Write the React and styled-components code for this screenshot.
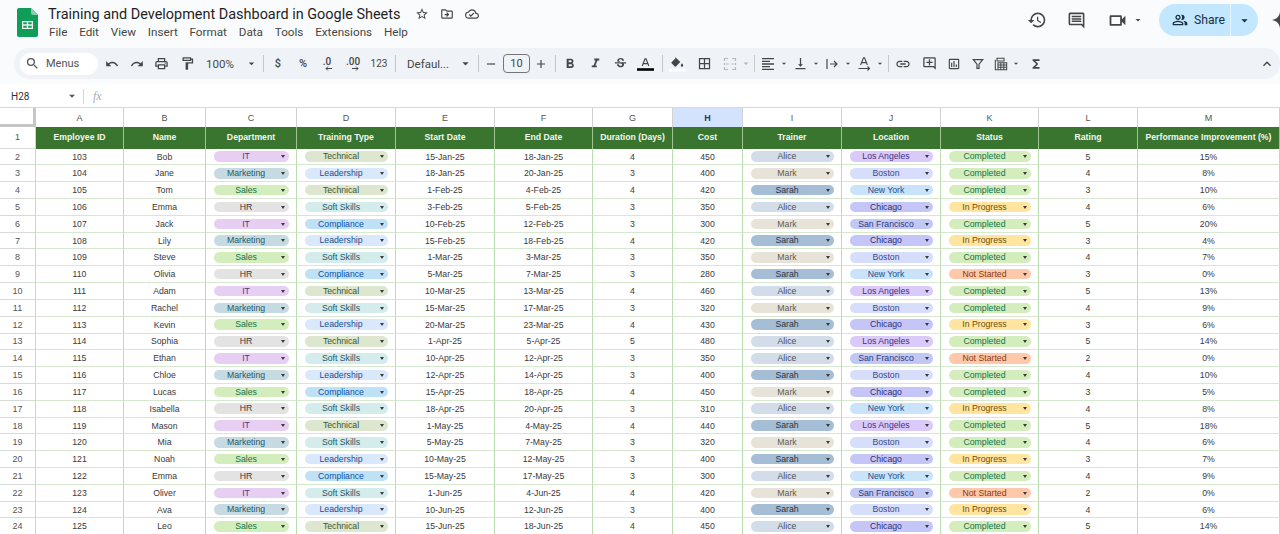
import React from "react";
import styled, { createGlobalStyle } from "styled-components";
import {
  MdStarBorder, MdOutlineDriveFileMove, MdOutlineCloudDone, MdHistory, MdOutlineComment,
  MdOutlineVideocam, MdOutlinePeopleAlt, MdArrowDropDown, MdSearch, MdUndo, MdRedo,
  MdOutlinePrint, MdOutlineFormatPaint, MdRemove, MdAdd, MdFormatBold, MdFormatItalic,
  MdStrikethroughS, MdBorderAll, MdFormatAlignLeft,
  MdVerticalAlignBottom, MdLink, MdOutlineAddComment, MdOutlineInsertChart,
  MdFunctions, MdExpandLess,
} from "react-icons/md";

const Global = createGlobalStyle`
  html, body { margin: 0; padding: 0; height: 534px; overflow: hidden; background: #fff; }
  * { box-sizing: border-box; }
`;

const COLUMNS = [
  ["A", 88], ["B", 82], ["C", 91], ["D", 99], ["E", 99], ["F", 98], ["G", 80],
  ["H", 70], ["I", 99], ["J", 99], ["K", 98], ["L", 99], ["M", 142],
];
const GRID = COLUMNS.map((c) => `${c[1]}px`).join(" ");

const HEADERS = [
  "Employee ID", "Name", "Department", "Training Type", "Start Date", "End Date", "Duration (Days)",
  "Cost", "Trainer", "Location", "Status", "Rating", "Performance Improvement (%)",
];

const ROWS = [
  "103|Bob|IT|Technical|15-Jan-25|18-Jan-25|4|450|Alice|Los Angeles|Completed|5|15%",
  "104|Jane|Marketing|Leadership|18-Jan-25|20-Jan-25|3|400|Mark|Boston|Completed|4|8%",
  "105|Tom|Sales|Technical|1-Feb-25|4-Feb-25|4|420|Sarah|New York|Completed|3|10%",
  "106|Emma|HR|Soft Skills|3-Feb-25|5-Feb-25|3|350|Alice|Chicago|In Progress|4|6%",
  "107|Jack|IT|Compliance|10-Feb-25|12-Feb-25|3|300|Mark|San Francisco|Completed|5|20%",
  "108|Lily|Marketing|Leadership|15-Feb-25|18-Feb-25|4|420|Sarah|Chicago|In Progress|3|4%",
  "109|Steve|Sales|Soft Skills|1-Mar-25|3-Mar-25|3|350|Mark|Boston|Completed|4|7%",
  "110|Olivia|HR|Compliance|5-Mar-25|7-Mar-25|3|280|Sarah|New York|Not Started|3|0%",
  "111|Adam|IT|Technical|10-Mar-25|13-Mar-25|4|460|Alice|Los Angeles|Completed|5|13%",
  "112|Rachel|Marketing|Soft Skills|15-Mar-25|17-Mar-25|3|320|Mark|Boston|Completed|4|9%",
  "113|Kevin|Sales|Leadership|20-Mar-25|23-Mar-25|4|430|Sarah|Chicago|In Progress|3|6%",
  "114|Sophia|HR|Technical|1-Apr-25|5-Apr-25|5|480|Alice|Los Angeles|Completed|5|14%",
  "115|Ethan|IT|Soft Skills|10-Apr-25|12-Apr-25|3|350|Alice|San Francisco|Not Started|2|0%",
  "116|Chloe|Marketing|Leadership|12-Apr-25|14-Apr-25|3|400|Sarah|Boston|Completed|4|10%",
  "117|Lucas|Sales|Compliance|15-Apr-25|18-Apr-25|4|450|Mark|Chicago|Completed|3|5%",
  "118|Isabella|HR|Soft Skills|18-Apr-25|20-Apr-25|3|310|Alice|New York|In Progress|4|8%",
  "119|Mason|IT|Technical|1-May-25|4-May-25|4|440|Sarah|Los Angeles|Completed|5|18%",
  "120|Mia|Marketing|Soft Skills|5-May-25|7-May-25|3|320|Mark|Boston|Completed|4|6%",
  "121|Noah|Sales|Leadership|10-May-25|12-May-25|3|400|Sarah|Chicago|In Progress|3|7%",
  "122|Emma|HR|Compliance|15-May-25|17-May-25|3|300|Alice|New York|Completed|4|9%",
  "123|Oliver|IT|Soft Skills|1-Jun-25|4-Jun-25|4|420|Mark|San Francisco|Not Started|2|0%",
  "124|Ava|Marketing|Leadership|10-Jun-25|12-Jun-25|3|400|Sarah|Boston|In Progress|4|6%",
  "125|Leo|Sales|Technical|15-Jun-25|18-Jun-25|4|450|Alice|Chicago|Completed|5|14%",
].map((r) => r.split("|"));

// chip colours: [background, text]
const CHIPS = {
  IT: ["#e6cff2", "#5a3286"],
  Marketing: ["#c6dbe1", "#215a6c"],
  Sales: ["#d4edbc", "#11734b"],
  HR: ["#e3e3e3", "#3d3d3d"],
  Technical: ["#dde6cf", "#38572f"],
  Leadership: ["#d9e8fb", "#1a4f8f"],
  "Soft Skills": ["#d4ecec", "#215a6c"],
  Compliance: ["#bfe1f6", "#0a53a8"],
  Alice: ["#d3dde9", "#4a4f57"],
  Mark: ["#e8e3d9", "#5f5b54"],
  Sarah: ["#a6bdd6", "#2a3340"],
  "Los Angeles": ["#d9caf9", "#45307f"],
  Boston: ["#d6defb", "#3a4a8a"],
  "New York": ["#c9e3fb", "#1a4f8f"],
  Chicago: ["#c5c6f7", "#2e2e7a"],
  "San Francisco": ["#c0c8f3", "#2e3a80"],
  Completed: ["#d4edbc", "#11734b"],
  "In Progress": ["#ffe5a0", "#6b4f10"],
  "Not Started": ["#ffc8aa", "#8a3a10"],
};

const Page = styled.div`
  width: 1280px;
  height: 534px;
  overflow: hidden;
  display: flex;
  flex-direction: column;
  background: #f9fbfd;
  font-family: "Roboto", "Liberation Sans", sans-serif;
  color: #444746;
`;

const TitleBar = styled.header`
  height: 48px;
  flex: none;
  display: flex;
  overflow: hidden;
`;

const Logo = styled.svg`
  width: 21px;
  height: 29px;
  margin: 8px 10px 0 17px;
  flex: none;
`;

const TitleCol = styled.div`
  display: flex;
  flex-direction: column;
`;

const DocTitle = styled.div`
  display: flex;
  align-items: center;
  height: 18px;
  margin-top: 5px;
  font-size: 14.45px;
  color: #1f1f1f;
  white-space: nowrap;
`;

const TitleIcon = styled.span`
  display: flex;
  justify-content: center;
  width: 25px;
  font-size: 14px;
  color: #444746;
  &:first-of-type { margin-left: 9px; }
`;

const MenuBar = styled.nav`
  display: flex;
  gap: 11.8px;
  height: 17px;
  align-items: center;
  font-size: 11.7px;
  padding-left: 1px;
  color: #444746;
`;

const Actions = styled.div`
  margin-left: auto;
  display: flex;
  align-items: flex-start;
  padding-top: 4px;
`;

const ActionIcon = styled.span`
  width: ${(p) => p.$w}px;
  height: 32px;
  display: flex;
  align-items: center;
  justify-content: center;
  font-size: ${(p) => p.$size || 20}px;
  color: #444746;
`;

const ShareButton = styled.div`
  width: 99px;
  height: 32px;
  margin-left: 15px;
  display: flex;
  align-items: center;
  border-radius: 16px;
  background: #c2e7ff;
  color: #1b2f42;
`;

const ShareMain = styled.div`
  width: 72px;
  height: 100%;
  display: flex;
  align-items: center;
  gap: 6px;
  padding-left: 13px;
  font-size: 12.2px;
  font-weight: 400;
  border-right: 1px solid #e3f3ff;
  svg { font-size: 16px; }
`;

const ShareCaret = styled.div`
  flex: 1;
  display: flex;
  justify-content: center;
  font-size: 15px;
`;

const Spark = styled.svg`
  width: 16px;
  height: 16px;
  margin: 8px -8px 0 14px;
  flex: none;
`;

const Toolbar = styled.div`
  height: 31px;
  flex: none;
  margin-left: 14px;
  padding-left: 6px;
  display: flex;
  align-items: center;
  background: #eff3f8;
  border-radius: 15px;
  color: #444746;
`;

const SearchPill = styled.div`
  width: 78px;
  height: 22px;
  margin-right: 2px;
  display: flex;
  align-items: center;
  gap: 6px;
  padding-left: 5px;
  border-radius: 11px;
  background: #fff;
  font-size: 11px;
  color: #555;
  svg { font-size: 15px; flex: none; }
`;

const Tool = styled.span`
  flex: none;
  width: ${(p) => p.$w}px;
  height: 22px;
  display: flex;
  align-items: center;
  justify-content: center;
  font-size: ${(p) => p.$size || 15}px;
  font-weight: ${(p) => (p.$bold ? 700 : 400)};
  color: ${(p) => (p.$off ? "#b4b8bb" : "#444746")};
`;

const Caret = styled(Tool)`
  font-size: 15px;
  width: ${(p) => p.$w || 10}px;
`;

const Sep = styled.span`
  flex: none;
  width: ${(p) => p.$w}px;
  height: 17px;
  display: flex;
  justify-content: center;
  &::before {
    content: "";
    width: 1px;
    background: #c7c7c7;
  }
`;

const ToolText = styled.span`
  flex: none;
  width: ${(p) => p.$w}px;
  padding-left: ${(p) => p.$pad || 0}px;
  text-align: ${(p) => (p.$pad ? "left" : "center")};
  font-size: ${(p) => p.$size || 11}px;
  font-weight: ${(p) => (p.$bold ? 500 : 400)};
  color: #444746;
  white-space: nowrap;
`;

const DecimalTool = styled(ToolText)`
  position: relative;
  top: -2px;
  svg {
    position: absolute;
    left: ${(p) => p.$arrowAt}px;
    top: 10px;
  }
`;

const SizeBox = styled.span`
  flex: none;
  width: 27px;
  height: 19px;
  margin-left: 4px;
  display: flex;
  align-items: center;
  justify-content: center;
  border: 1px solid #747775;
  border-radius: 4px;
  font-size: 11px;
`;

const Collapse = styled(Tool)`
  margin-left: auto;
  margin-right: 3px;
`;

const FormulaRow = styled.div`
  height: 29px;
  flex: none;
  padding-top: 6px;
  background: linear-gradient(#f9fbfd 0 5px, #fff 5px);
  display: flex;
  align-items: center;
  border-bottom: 1px solid #d5d7d9;
`;

const NameBox = styled.div`
  width: 83px;
  padding-left: 11px;
  display: flex;
  align-items: center;
  justify-content: space-between;
  padding-right: 4px;
  font-size: 10px;
  color: #333;
  svg { font-size: 14px; color: #555; }
`;

const FxLabel = styled.div`
  height: 15px;
  padding-left: 9px;
  border-left: 1px solid #d5d7d9;
  font-family: "Liberation Serif", serif;
  font-style: italic;
  font-size: 12px;
  line-height: 15px;
  color: #a8abad;
`;

const Sheet = styled.div`
  flex: 1;
  background: #fff;
  font-family: "Liberation Sans", Arial, sans-serif;
  font-size: 8.7px;
  overflow: hidden;
`;

const Row = styled.div`
  display: grid;
  grid-template-columns: 36px ${GRID};
  height: ${(p) => p.$h}px;
`;

const Corner = styled.div`
  background: #fff;
  border-right: 3px solid #c4c7c5;
  border-bottom: 3px solid #c4c7c5;
`;

const ColHead = styled.div`
  display: flex;
  align-items: center;
  justify-content: center;
  font-size: 9px;
  color: ${(p) => (p.$active ? "#1c3f70" : "#555")};
  font-weight: ${(p) => (p.$active ? 700 : 400)};
  background: ${(p) => (p.$active ? "#d3e3fd" : "#fff")};
  border-right: 1px solid #d0d3d1;
`;

const RowHead = styled.div`
  display: flex;
  align-items: center;
  justify-content: center;
  font-size: 9px;
  color: #555;
  background: #fff;
  border-right: 1px solid #d0d3d1;
  border-bottom: 1px solid #d8dada;
`;

const HeadCell = styled.div`
  display: flex;
  align-items: center;
  justify-content: center;
  padding-bottom: 1px;
  background: #3a7530;
  color: #f2f7f0;
  font-weight: 700;
  white-space: nowrap;
  border-right: 1px solid #9fc490;
`;

const Cell = styled.div`
  display: flex;
  align-items: center;
  justify-content: center;
  color: #3a3a3a;
  border-right: 1px solid #bcdcb2;
  border-bottom: 1px solid #d6e9d0;
  white-space: nowrap;
  min-width: 0;
`;

const Chip = styled.div`
  width: 100%;
  margin: 0 7.5px;
  height: 10.5px;
  position: relative;
  border-radius: 6px;
  padding-right: 10px;
  text-align: center;
  line-height: 10.5px;
  background: ${(p) => p.$bg};
  color: ${(p) => p.$fg};
  &::after {
    content: "";
    position: absolute;
    right: 4px;
    top: 4px;
    border-left: 2.5px solid transparent;
    border-right: 2.5px solid transparent;
    border-top: 3px solid #3a3a3a;
  }
`;

const TextColor = () => (
  <svg width="19" height="18" viewBox="0 0 19 18">
    <path d="M6.2 11 9 3.8h1L12.8 11M7.3 8.6h4.4" fill="none" stroke="#444746" strokeWidth="1.2" />
    <rect x="1" y="13.2" width="17" height="2.6" fill="#000" />
  </svg>
);

const FillIcon = () => (
  <svg width="19" height="18" viewBox="0 0 19 18">
    <path d="M6.5 1.5 7.7 3 3.6 7.2a.8.8 0 0 0 0 1.1l3.2 3.1c.3.3.8.3 1.1 0l4.4-4.3L7.7 2.4z" fill="#444746" />
    <path d="M14 8.3c.8 1 1.2 1.7 1.2 2.2a1.2 1.2 0 0 1-2.4 0c0-.5.4-1.2 1.2-2.2z" fill="#444746" />
    <rect x="1" y="14" width="17" height="2.6" fill="#fff" />
  </svg>
);

const MergeIcon = () => (
  <svg width="14" height="14" viewBox="0 0 14 14" fill="none" stroke="#b4b8bb" strokeWidth="1.2">
    <path d="M1.5 4V1.5H5M9 1.5h3.5V4M1.5 10v2.5H5M9 12.5h3.5V10M1.5 6v2M12.5 6v2M3 7h2.5M8.5 7H11" />
  </svg>
);

const WrapIcon = () => (
  <svg width="14" height="14" viewBox="0 0 14 14" fill="none" stroke="#444746" strokeWidth="1.2">
    <path d="M2 2v10M5 7h7M9 4l3 3-3 3" />
  </svg>
);

const RotateIcon = () => (
  <svg width="15" height="15" viewBox="0 0 15 15" fill="none" stroke="#444746" strokeWidth="1.1">
    <path d="M3.6 9 6.5 1.8h1L10.4 9M4.8 6.6h4.4M1.5 12.5h11M10.5 10.5l2 2-2 2" />
  </svg>
);

const FilterIcon = () => (
  <svg width="12" height="12" viewBox="0 0 14 14" fill="none" stroke="#444746" strokeWidth="1.4">
    <path d="M1.5 2h11L8.2 7.2V12H5.8V7.2z" />
  </svg>
);

const TableIcon = () => (
  <svg width="14" height="14" viewBox="0 0 16 16" fill="none" stroke="#444746" strokeWidth="1.2">
    <path d="M1.5 3v11.5H4M3.5 1.5h8v3h-8z" />
    <path d="M4.5 6.5h10v8h-10zM4.5 9.2h10M4.5 11.8h10M7.8 6.5v8M11.2 6.5v8" />
  </svg>
);

const DecimalArrow = ({ left }) => (
  <svg width="7" height="5" viewBox="0 0 7 5" fill="none" stroke="#444746" strokeWidth="1">
    {left ? <path d="M7 2.5H1M3 .5l-2 2 2 2" /> : <path d="M0 2.5h6M4 .5l2 2-2 2" />}
  </svg>
);

const App = () => (
  <Page>
    <Global />
    <TitleBar>
      <Logo viewBox="0 0 21 29">
        <path d="M2 0h12l7 7v20a2 2 0 0 1-2 2H2a2 2 0 0 1-2-2V2a2 2 0 0 1 2-2z" fill="#0f9d58" />
        <path d="M14 0l7 7h-5a2 2 0 0 1-2-2z" fill="#87ceac" />
        <path d="M5 13h11v8H5z M6.3 14.3v2h3.5v-2z M11.2 14.3v2h3.5v-2z M6.3 17.7v2h3.5v-2z M11.2 17.7v2h3.5v-2z" fill="#f1f1f1" fillRule="evenodd" />
      </Logo>
      <TitleCol>
        <DocTitle>
          Training and Development Dashboard in Google Sheets
          <TitleIcon><MdStarBorder /></TitleIcon>
          <TitleIcon><MdOutlineDriveFileMove /></TitleIcon>
          <TitleIcon><MdOutlineCloudDone /></TitleIcon>
        </DocTitle>
        <MenuBar>
          {["File", "Edit", "View", "Insert", "Format", "Data", "Tools", "Extensions", "Help"].map((m) => (
            <span key={m}>{m}</span>
          ))}
        </MenuBar>
      </TitleCol>
      <Actions>
        <ActionIcon $w={26} $size={20}><MdHistory /></ActionIcon>
        <ActionIcon $w={52} $size={19}><MdOutlineComment /></ActionIcon>
        <ActionIcon $w={30} $size={21}><MdOutlineVideocam /></ActionIcon>
        <ActionIcon $w={12} $size={14}><MdArrowDropDown /></ActionIcon>
        <ShareButton>
          <ShareMain><MdOutlinePeopleAlt />Share</ShareMain>
          <ShareCaret><MdArrowDropDown /></ShareCaret>
        </ShareButton>
        <Spark viewBox="0 0 16 16">
          <path d="M8 0c.6 4.4 3.2 7.2 8 8-4.8.8-7.4 3.6-8 8-.6-4.4-3.2-7.2-8-8 4.8-.8 7.4-3.6 8-8z" fill="#444746" />
        </Spark>
      </Actions>
    </TitleBar>

    <Toolbar>
      <SearchPill><MdSearch />Menus</SearchPill>
      <Tool $w={24} $size={14}><MdUndo /></Tool>
      <Tool $w={26} $size={14}><MdRedo /></Tool>
      <Tool $w={23} $size={15}><MdOutlinePrint /></Tool>
      <Tool $w={28} $size={15}><MdOutlineFormatPaint /></Tool>
      <ToolText $w={44} $pad={5} $size={11.5}>100%</ToolText>
      <Caret $w={13}><MdArrowDropDown /></Caret>
      <Sep $w={10} />
      <ToolText $w={20} $bold>$</ToolText>
      <ToolText $w={30} $bold>%</ToolText>
      <DecimalTool $w={18} $size={10} $bold $arrowAt={7}>.0<DecimalArrow left /></DecimalTool>
      <DecimalTool $w={34} $size={10} $bold $arrowAt={16}>.00<DecimalArrow /></DecimalTool>
      <ToolText $w={18} $size={10}>123</ToolText>
      <Sep $w={14} />
      <ToolText $w={55} $pad={5} $size={11.5}>Defaul...</ToolText>
      <Caret $w={16}><MdArrowDropDown /></Caret>
      <Sep $w={10} />
      <Tool $w={16} $size={14}><MdRemove /></Tool>
      <SizeBox>10</SizeBox>
      <Tool $w={22} $size={14}><MdAdd /></Tool>
      <Sep $w={6} />
      <Tool $w={24} $size={16}><MdFormatBold /></Tool>
      <Tool $w={26} $size={15}><MdFormatItalic /></Tool>
      <Tool $w={24} $size={15}><MdStrikethroughS /></Tool>
      <Tool $w={26}><TextColor /></Tool>
      <Sep $w={8} />
      <Tool $w={22}><FillIcon /></Tool>
      <Tool $w={32} $size={15}><MdBorderAll /></Tool>
      <Tool $w={20}><MergeIcon /></Tool>
      <Caret $w={12} $off><MdArrowDropDown /></Caret>
      <Sep $w={5} />
      <Tool $w={22} $size={16}><MdFormatAlignLeft /></Tool>
      <Caret><MdArrowDropDown /></Caret>
      <Tool $w={22} $size={15}><MdVerticalAlignBottom /></Tool>
      <Caret><MdArrowDropDown /></Caret>
      <Tool $w={22}><WrapIcon /></Tool>
      <Caret><MdArrowDropDown /></Caret>
      <Tool $w={22}><RotateIcon /></Tool>
      <Caret><MdArrowDropDown /></Caret>
      <Sep $w={6} />
      <Tool $w={24} $size={16}><MdLink /></Tool>
      <Tool $w={28} $size={15}><MdOutlineAddComment /></Tool>
      <Tool $w={22} $size={14}><MdOutlineInsertChart /></Tool>
      <Tool $w={26}><FilterIcon /></Tool>
      <Tool $w={20}><TableIcon /></Tool>
      <Caret><MdArrowDropDown /></Caret>
      <Tool $w={30} $size={14}><MdFunctions /></Tool>
      <Collapse $w={20} $size={16}><MdExpandLess /></Collapse>
    </Toolbar>

    <FormulaRow>
      <NameBox>H28<MdArrowDropDown /></NameBox>
      <FxLabel>fx</FxLabel>
    </FormulaRow>

    <Sheet>
      <Row $h={19}>
        <Corner />
        {COLUMNS.map(([name]) => (
          <ColHead key={name} $active={name === "H"}>{name}</ColHead>
        ))}
      </Row>
      <Row $h={21.6}>
        <RowHead>1</RowHead>
        {HEADERS.map((h) => <HeadCell key={h}>{h}</HeadCell>)}
      </Row>
      {ROWS.map((row, i) => (
        <Row key={i} $h={16.82}>
          <RowHead>{i + 2}</RowHead>
          {row.map((val, j) => (
            <Cell key={j}>
              {[2, 3, 8, 9, 10].includes(j)
                ? <Chip $bg={CHIPS[val][0]} $fg={CHIPS[val][1]}>{val}</Chip>
                : val}
            </Cell>
          ))}
        </Row>
      ))}
    </Sheet>
  </Page>
);

export default App;
